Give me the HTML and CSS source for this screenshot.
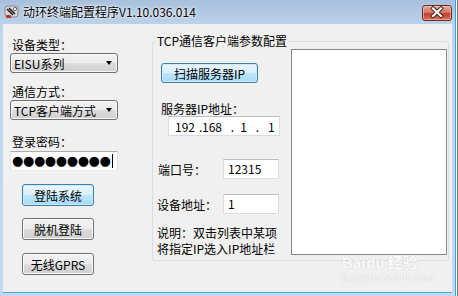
FILE: index.html
```html
<!DOCTYPE html>
<html lang="zh-CN">
<head>
  <meta charset="UTF-8" />
  <title>动环终端配置程序</title>
  <link rel="stylesheet" href="styles.css">
</head>
<body>
  <div class="screen">
    <div class="window">
      <div class="titlebar">
        <svg class="app-icon" width="16" height="16" viewBox="0 0 16 16">
          <rect x="1" y="2" width="13" height="11" rx="3" fill="#d8d8d8" stroke="#8a8a8a"/>
          <path d="M3 5 L9 11 M5 4 L11 10" stroke="#222" stroke-width="1.6"/>
          <circle cx="11" cy="5" r="1.6" fill="#fff" stroke="#666"/>
          <rect x="2" y="11" width="5" height="3" rx="1" fill="#c0302a"/>
        </svg>
        <span class="title">动环终端配置程序V1.10.036.014</span>
        <div class="close">
          <svg width="30" height="15" viewBox="0 0 30 15">
            <path d="M11 3.5 L19 11 M19 3.5 L11 11" stroke="#4b1a16" stroke-width="4" stroke-linecap="square"/>
            <path d="M11 3.5 L19 11 M19 3.5 L11 11" stroke="#fff" stroke-width="2.2" stroke-linecap="square"/>
          </svg>
        </div>
      </div>

      <div class="client">
        <div class="side">
          <div class="label">设备类型：</div>
          <div class="combo">EISU系列<span class="arrow"></span></div>
          <div class="label label-2">通信方式：</div>
          <div class="combo">TCP客户端方式<span class="arrow"></span></div>
          <div class="label label-3">登录密码：</div>
          <div class="password"><span class="dots">●●●●●●●●●</span><span class="caret"></span></div>
          <button class="btn btn-blue btn-login">登陆系统</button>
          <button class="btn btn-offline">脱机登陆</button>
          <button class="btn btn-gprs">无线GPRS</button>
        </div>

        <fieldset class="group">
          <legend>TCP通信客户端参数配置</legend>
          <div class="group-left">
            <button class="btn btn-blue scan">扫描服务器IP</button>
            <div class="ip-label">服务器IP地址：</div>
            <div class="ip-box">
              <span class="seg seg-1">192</span><span class="dot">.</span><span class="seg seg-2">168</span><span class="dot dot-2">.</span><span class="seg seg-3">1</span><span class="dot dot-3">.</span><span class="seg">1</span>
            </div>
            <div class="field-row row-port">
              <span class="field-label">端口号：</span>
              <div class="text-box">12315</div>
            </div>
            <div class="field-row row-addr">
              <span class="field-label addr-label">设备地址：</span>
              <div class="text-box">1</div>
            </div>
            <div class="note">说明：双击列表中某项<br>将指定IP选入IP地址栏</div>
          </div>
          <div class="listbox"></div>
        </fieldset>
      </div>
    </div>
    <div class="backdrop"></div>

    <div class="watermark">
      <div class="wm-top">Bai<span class="wm-du">du</span>经验</div>
      <div class="wm-url">jingyan.baidu.com</div>
    </div>
  </div>
</body>
</html>
```

FILE: styles.css
```css
* {
  box-sizing: border-box;
}

body {
  margin: 0;
  width: 458px;
  height: 296px;
  overflow: hidden;
  font-family: "Noto Sans CJK SC", sans-serif;
  font-size: 12px;
  color: #000;
  background: #fff;
}

.screen {
  position: relative;
  display: flex;
  height: 296px;
}

.window {
  width: 455px;
  height: 296px;
  display: flex;
  flex-direction: column;
  padding: 0 3px 3px 3px;
  background: linear-gradient(#a7c0dc, #c0d6ee 30px, #c4d9ef);
}

.titlebar {
  height: 24px;
  margin: 0 -3px;
  padding: 0 3px 0 4px;
  display: flex;
  align-items: center;
  flex-shrink: 0;
}

.title {
  margin-left: 3px;
  line-height: 14px;
  text-shadow: 0 0 4px #fff, 0 0 2px #fff;
}

.close {
  margin-left: auto;
  margin-top: 1px;
  width: 30px;
  height: 16px;
  border: 1px solid #6e2a24;
  border-radius: 3px;
  background: linear-gradient(#e8a595, #d47a68 45%, #c4412e 55%, #d3735e);
  box-shadow: inset 0 0 0 1px rgba(255, 220, 210, 0.5);
}

.close svg {
  display: block;
  margin: -1px 0 0 -1px;
}

.client {
  flex: 1;
  display: flex;
  background: #f0f0f0;
  border-bottom: 1px solid #4fa6d8;
}

.side {
  width: 115px;
  padding: 14px 0 0 7px;
  display: flex;
  flex-direction: column;
  align-items: flex-start;
}

.label {
  line-height: 14px;
  margin-left: 2px;
}

.label-2 {
  margin-top: 12px;
}

.label-3 {
  margin-top: 15px;
}

.combo {
  width: 108px;
  height: 20px;
  margin-top: 1px;
  display: flex;
  align-items: center;
  padding-left: 3px;
  border: 1px solid #707070;
  border-radius: 3px;
  background: linear-gradient(#f2f2f2, #ebebeb 50%, #dddddd 50%, #cfcfcf);
  box-shadow: inset 0 0 0 1px #f8f8f8;
  white-space: nowrap;
}

.arrow {
  margin-left: auto;
  margin-right: 5px;
  width: 0;
  height: 0;
  border-left: 3.5px solid transparent;
  border-right: 3.5px solid transparent;
  border-top: 4px solid #000;
}

.password {
  width: 108px;
  height: 20px;
  margin-top: 2px;
  display: flex;
  align-items: center;
  overflow: hidden;
  background: #fff;
  border: 1px solid #abadb3;
  border-color: #abadb3 #e2e3ea #e3e9ef #e2e3ea;
}

.dots {
  font-family: "DejaVu Sans", sans-serif;
  font-size: 13px;
  line-height: 14px;
  margin-left: 1px;
  letter-spacing: -0.4px;
  white-space: nowrap;
}

.caret {
  width: 1px;
  height: 14px;
  background: #000;
  margin-left: 1px;
}

.btn {
  font-family: inherit;
  font-size: 12px;
  color: #000;
  padding: 0;
  width: 72px;
  height: 22px;
  margin-left: 12px;
  border: 1px solid #707070;
  border-radius: 3px;
  background: linear-gradient(#f2f2f2, #ebebeb 50%, #dddddd 50%, #cfcfcf);
  box-shadow: inset 0 0 0 1px #fbfbfb;
}

.btn-blue {
  border-color: #3c7fb1;
  background: linear-gradient(#eaf6fd, #d9f0fc 50%, #bee6fd 50%, #a7d9f5);
  box-shadow: inset 0 0 0 1px #cfeafb;
}

.btn-login {
  margin-top: 13px;
}

.btn-offline {
  margin-top: 12px;
}

.btn-gprs {
  margin-top: 13px;
}

.group {
  margin: 10px 0 0 34px;
  width: 297px;
  height: 227px;
  padding: 0 1px 0 0;
  min-width: 0;
  display: flex;
  border: 1px solid #d5dfe5;
  border-radius: 3px;
}

.group legend {
  margin-left: 3px;
  padding: 0 1px;
  line-height: 14px;
}

.group-left {
  width: 138px;
  display: flex;
  flex-direction: column;
  align-items: flex-start;
}

.scan {
  width: 97px;
  height: 20px;
  margin: 15px 0 0 8px;
}

.ip-label {
  margin: 19px 0 0 8px;
  line-height: 14px;
}

.ip-box {
  width: 112px;
  height: 20px;
  margin: 0 0 0 15px;
  padding-left: 6px;
  display: flex;
  align-items: center;
  background: #fff;
  border: 1px solid #d9dde3;
  border-top-color: #b9bdc4;
  white-space: nowrap;
}

.seg,
.dot {
  flex-shrink: 0;
}

.seg-1,
.seg-2 {
  width: 24px;
}

.dot {
  width: 3px;
}

.dot-2 {
  width: 8px;
  text-align: right;
}

.seg-3 {
  width: 13px;
  text-align: right;
}

.dot-3 {
  width: 21px;
  text-align: center;
}

.field-row {
  display: flex;
  align-items: center;
  height: 20px;
}

.row-port {
  margin-top: 23px;
}

.row-addr {
  margin-top: 15px;
}

.field-label {
  width: 65px;
  margin-left: 5px;
  white-space: nowrap;
}

.addr-label {
  width: 66px;
  margin-left: 4px;
}

.text-box {
  width: 56px;
  height: 20px;
  padding-left: 4px;
  line-height: 18px;
  background: #fff;
  border: 1px solid #d9dde3;
  border-top-color: #b9bdc4;
}

.note {
  margin: 11px 0 0 4px;
  line-height: 16px;
  white-space: nowrap;
}

.listbox {
  width: 156px;
  height: 206px;
  margin-top: 1px;
  background: #fff;
  border: 1px solid #828790;
}

.backdrop {
  width: 3px;
  border-left: 1px solid #39a3da;
  background: linear-gradient(to right, #f4f8fb 1px, #6f7f8f 1px);
}

.watermark {
  position: absolute;
  left: 342px;
  top: 254px;
  color: #fff;
  opacity: 0.8;
  text-shadow: 0 0 1px #c8c8c8, 0 0 1px #c8c8c8;
  font-family: "Liberation Sans", sans-serif;
}

.wm-top {
  font-size: 15px;
  font-weight: bold;
  line-height: 17px;
  font-family: "Liberation Sans", "Noto Sans CJK SC", sans-serif;
}

.wm-du {
  margin: 0 3px 0 1px;
}

.wm-url {
  font-size: 11px;
  line-height: 12px;
  letter-spacing: 0.2px;
}
```
